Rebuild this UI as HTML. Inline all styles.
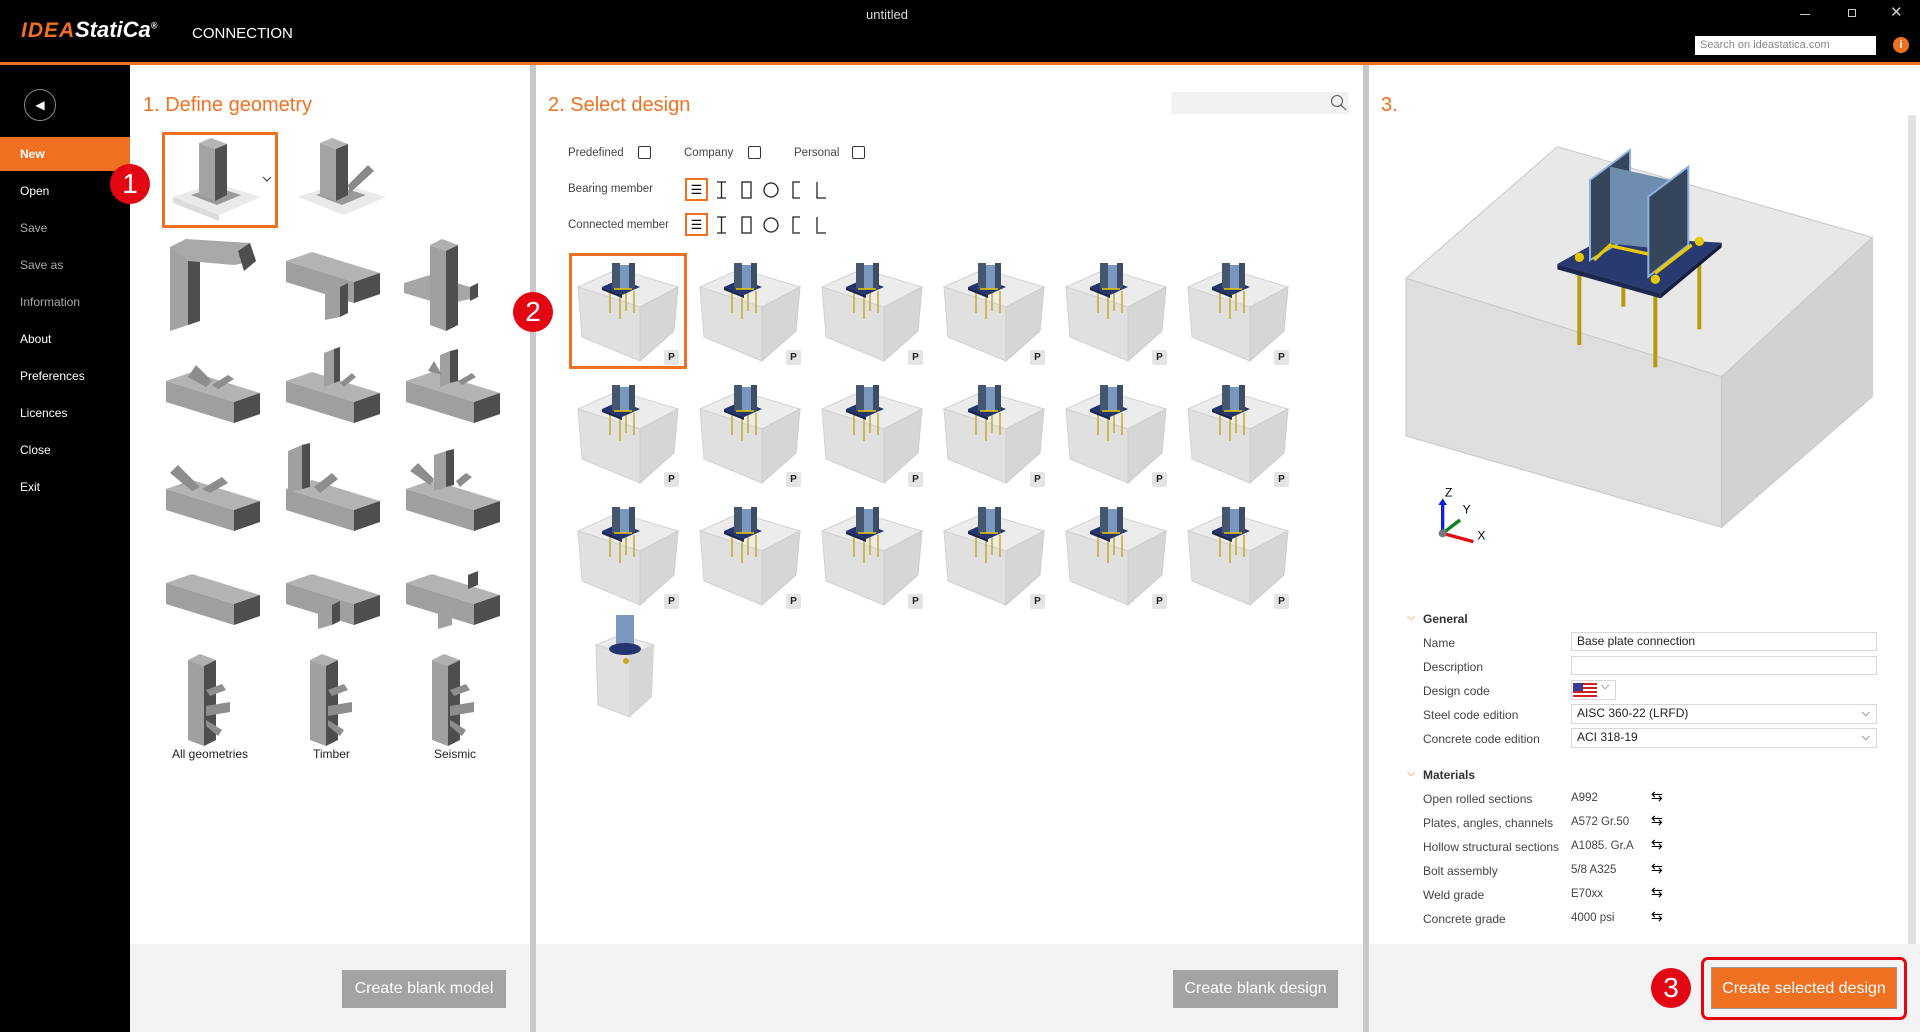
<!DOCTYPE html>
<html><head><meta charset="utf-8"><style>
*{margin:0;padding:0;box-sizing:border-box}
body{width:1920px;height:1032px;overflow:hidden;background:#fff;font-family:"Liberation Sans",sans-serif;position:relative}
.a{position:absolute}
.hdr{left:0;top:0;width:1920px;height:62px;background:#000}
.ol{left:0;top:62px;width:1920px;height:3px;background:#f07022}
.side{left:0;top:65px;width:130px;height:967px;background:#000}
.si{position:absolute;left:20px;font-size:12px;color:#fff}
.ttl{font-size:20px;color:#f07022}
.div{background:#c8c8c8;width:6px;top:65px;height:967px}
.bot{top:944px;height:88px;background:#f3f3f3}
.btn{background:#a3a3a3;color:#fff;font-size:16px;text-align:center;line-height:38px;height:38px}
.lbl{font-size:11.5px;color:#444}
.cb{width:13px;height:13px;border:1px solid #333;border-radius:2px}
.pb{width:15px;height:15px;background:#e4e4e4;border-radius:2px;font-size:10px;font-weight:bold;text-align:center;line-height:15px;color:#222}
.pl{font-size:12px;color:#444;left:1423px}
.inp{left:1571px;width:306px;height:19px;border:1px solid #d8d8d8;font-size:12px;color:#222;padding-left:5px;line-height:17px}
.rc{border-radius:50%;background:#e30613;color:#fff;text-align:center;font-size:28px}
.geo{width:110px;height:100px}
</style></head><body>
<svg width="0" height="0" style="position:absolute">
<defs>
<symbol id="blk" viewBox="0 0 116 116">
<polygon points="8,34 48,16 108,34 70,54" fill="#ececec" stroke="#d2d2d2"/>
<polygon points="8,34 70,54 70,108 12,84" fill="#e0e0e0" stroke="#d2d2d2"/>
<polygon points="70,54 108,34 104,78 70,108" fill="#d6d6d6" stroke="#cdcdcd"/>
</symbol>
<symbol id="col" viewBox="0 0 116 116">
<g stroke="#c9a820" stroke-width="1.5"><line x1="40" y1="36" x2="40" y2="60"/><line x1="50" y1="40" x2="50" y2="66"/><line x1="56" y1="34" x2="56" y2="58"/><line x1="64" y1="38" x2="64" y2="60"/></g>
<polygon points="32,34 50,26 70,34 52,42" fill="#24346e"/>
<polygon points="32,34 52,42 52,45 32,37" fill="#1a2550"/>
<rect x="42" y="10" width="8" height="26" fill="#45566f"/>
<rect x="50" y="12" width="9" height="24" fill="#7a97bf"/>
<rect x="59" y="10" width="6" height="26" fill="#3d4d66"/>
<line x1="44" y1="36" x2="62" y2="36" stroke="#e8c800" stroke-width="1.5"/>
</symbol>
<symbol id="beam" viewBox="0 0 110 100">
<polygon points="6,46 32,37 100,58 74,67" fill="#b3b3b3"/>
<polygon points="6,46 74,67 74,88 6,67" fill="#9f9f9f"/>
<polygon points="74,67 100,58 100,79 74,88" fill="#4e4e4e"/>
</symbol>
<symbol id="vcol" viewBox="0 0 110 100">
<polygon points="30,10 42,4 58,10 46,16" fill="#b0b0b0"/>
<polygon points="30,10 46,16 46,96 30,90" fill="#a0a0a0"/>
<polygon points="46,16 58,10 58,90 46,96" fill="#4e4e4e"/>
</symbol>
<symbol id="flt" viewBox="0 0 130 24">
<g fill="none" stroke="#222" stroke-width="1.3">
<path d="M2 4h9M6.5 4v16M2 20h9"/>
<rect x="27" y="4" width="9" height="16"/>
<circle cx="56" cy="12" r="7"/>
<path d="M85 4h-7v16h7"/>
<path d="M102 4v16h9"/>
</g></symbol>
</defs></svg>

<div class="a hdr"></div>
<div class="a" style="left:21px;top:19px;font-size:21px;font-weight:bold;font-style:italic;color:#f07022;letter-spacing:1px">IDEA</div>
<div class="a" style="left:75px;top:17px;font-size:22px;font-weight:bold;font-style:italic;color:#fff">StatiCa<sup style="font-size:9px">®</sup></div>
<div class="a" style="left:192px;top:25px;font-size:15px;color:#fff">CONNECTION</div>
<div class="a" style="left:866px;top:7px;font-size:13px;color:#ddd">untitled</div>
<div class="a" style="left:1800px;top:14px;width:10px;height:1px;background:#ccc"></div>
<div class="a" style="left:1848px;top:9px;width:8px;height:8px;border:1px solid #ccc"></div>
<div class="a" style="left:1890px;top:3px;font-size:15px;color:#ccc">✕</div>
<div class="a" style="left:1695px;top:36px;width:181px;height:19px;background:#fff;font-size:11px;color:#888;padding:3px 5px">Search on ideastatica.com</div>
<div class="a" style="left:1893px;top:37px;width:16px;height:16px;border-radius:50%;background:#f07022;color:#fff;font-size:11px;font-weight:bold;text-align:center;line-height:16px">i</div>
<div class="a ol"></div>

<div class="a side"></div>
<div class="a" style="left:24px;top:89px;width:32px;height:32px;border:1px solid #888;border-radius:50%;color:#fff;font-size:12px;text-align:center;line-height:30px">◀</div>
<div class="a" style="left:0;top:137px;width:130px;height:34px;background:#f07022"></div>
<div class="si" style="top:147px;font-weight:bold">New</div>
<div class="si" style="top:184px">Open</div>
<div class="si" style="top:221px;color:#aaa">Save</div>
<div class="si" style="top:258px;color:#aaa">Save as</div>
<div class="si" style="top:295px;color:#aaa">Information</div>
<div class="si" style="top:332px">About</div>
<div class="si" style="top:369px">Preferences</div>
<div class="si" style="top:406px">Licences</div>
<div class="si" style="top:443px">Close</div>
<div class="si" style="top:480px">Exit</div>

<!-- panel 1 -->
<div class="a ttl" style="left:143px;top:94px">1. Define geometry</div>
<div class="a" style="left:162px;top:132px;width:116px;height:96px;border:3px solid #f07022"></div>
<svg class="a" style="left:165px;top:135px" width="110" height="90" viewBox="0 0 110 90"><polygon points="8,62 50,48 96,62 54,80" fill="#eaeaea"/><polygon points="8,62 54,80 54,86 8,68" fill="#dcdcdc"/><polygon points="26,60 50,52 76,60 52,70" fill="#9a9a9a"/><polygon points="34,8 46,3 62,9 50,14" fill="#b5b5b5"/><polygon points="34,8 50,14 50,66 34,60" fill="#a3a3a3"/><polygon points="50,14 62,9 62,60 50,66" fill="#505050"/><path d="M98 42l4 4 4-4" stroke="#333" fill="none"/></svg>
<svg class="a" style="left:290px;top:135px" width="110" height="90" viewBox="0 0 110 90"><polygon points="8,62 50,48 96,62 54,80" fill="#eaeaea"/><polygon points="26,60 50,52 76,60 52,70" fill="#9a9a9a"/><polygon points="30,8 42,3 58,9 46,14" fill="#b5b5b5"/><polygon points="30,8 46,14 46,66 30,60" fill="#a3a3a3"/><polygon points="46,14 58,9 58,60 46,66" fill="#505050"/><polygon points="58,50 78,30 84,36 60,58" fill="#8a8a8a"/></svg>
<svg class="a geo" style="left:160px;top:235px" viewBox="0 0 110 100"><polygon points="10,12 28,4 28,90 10,96" fill="#a2a2a2"/><polygon points="28,20 40,16 40,86 28,90" fill="#4e4e4e"/><polygon points="10,12 26,4 90,8 96,26 74,30 28,26" fill="#a8a8a8"/><polygon points="90,8 96,26 84,36 78,16" fill="#4e4e4e"/></svg>
<svg class="a geo" style="left:280px;top:235px"><use href="#beam" y="-20"/><polygon points="45,55 60,52 60,82 45,85" fill="#a0a0a0"/><polygon points="60,52 68,48 68,78 60,82" fill="#4e4e4e"/></svg>
<svg class="a geo" style="left:400px;top:235px"><polygon points="4,48 30,40 70,52 70,64 44,70 4,58" fill="#a6a6a6"/><polygon points="70,52 78,48 78,62 70,66" fill="#4e4e4e"/><use href="#vcol"/></svg>
<svg class="a geo" style="left:160px;top:335px"><use href="#beam"/><polygon points="28,42 36,30 52,46 46,52" fill="#8d8d8d"/><polygon points="52,50 68,40 74,44 58,54" fill="#8d8d8d"/></svg>
<svg class="a geo" style="left:280px;top:335px"><use href="#beam"/><polygon points="44,18 54,14 54,48 44,52" fill="#a0a0a0"/><polygon points="54,14 60,12 60,46 54,48" fill="#4e4e4e"/><polygon points="60,48 72,38 76,42 64,52" fill="#8d8d8d"/></svg>
<svg class="a geo" style="left:400px;top:335px"><use href="#beam"/><polygon points="40,20 50,16 50,48 40,52" fill="#a0a0a0"/><polygon points="50,16 58,14 58,46 50,48" fill="#4e4e4e"/><polygon points="28,36 34,26 42,40" fill="#8d8d8d"/><polygon points="58,46 72,38 76,42 62,50" fill="#8d8d8d"/></svg>
<svg class="a geo" style="left:160px;top:435px"><use href="#beam" y="8"/><polygon points="10,38 18,30 40,52 32,56" fill="#8d8d8d"/><polygon points="42,54 62,42 68,48 50,58" fill="#8d8d8d"/></svg>
<svg class="a geo" style="left:280px;top:435px"><use href="#beam" y="8"/><polygon points="8,16 22,10 22,54 8,58" fill="#a0a0a0"/><polygon points="22,10 30,8 30,52 22,54" fill="#4e4e4e"/><polygon points="34,52 52,38 58,44 40,58" fill="#8d8d8d"/></svg>
<svg class="a geo" style="left:400px;top:435px"><use href="#beam" y="8"/><polygon points="34,20 46,16 46,52 34,56" fill="#a0a0a0"/><polygon points="46,16 54,14 54,50 46,52" fill="#4e4e4e"/><polygon points="10,36 18,28 34,44 30,50" fill="#8d8d8d"/><polygon points="56,46 66,38 72,42 60,52" fill="#8d8d8d"/></svg>
<svg class="a geo" style="left:160px;top:545px"><use href="#beam" y="-8"/></svg>
<svg class="a geo" style="left:280px;top:545px"><use href="#beam" y="-8"/><polygon points="38,64 52,60 52,80 38,84" fill="#a0a0a0"/><polygon points="52,60 60,56 60,76 52,80" fill="#4e4e4e"/></svg>
<svg class="a geo" style="left:400px;top:545px"><use href="#beam" y="-8"/><polygon points="38,64 52,60 52,80 38,84" fill="#a0a0a0"/><polygon points="68,30 78,26 78,40 68,44" fill="#4e4e4e"/></svg>
<svg class="a geo" style="left:160px;top:650px"><use href="#vcol" x="-2"/><polygon points="46,40 62,34 66,40 50,46" fill="#8d8d8d"/><polygon points="46,56 70,52 70,62 46,66" fill="#8d8d8d"/><polygon points="46,70 62,80 58,86 46,76" fill="#8d8d8d"/></svg>
<svg class="a geo" style="left:282px;top:650px"><use href="#vcol" x="-2"/><polygon points="46,40 62,34 66,40 50,46" fill="#8d8d8d"/><polygon points="46,56 70,52 70,62 46,66" fill="#8d8d8d"/><polygon points="46,70 62,80 58,86 46,76" fill="#8d8d8d"/></svg>
<svg class="a geo" style="left:404px;top:650px"><use href="#vcol" x="-2"/><polygon points="46,40 62,34 66,40 50,46" fill="#8d8d8d"/><polygon points="46,56 70,52 70,62 46,66" fill="#8d8d8d"/><polygon points="46,70 62,80 58,86 46,76" fill="#8d8d8d"/></svg>
<div class="a" style="left:172px;top:747px;font-size:12px;color:#222">All geometries</div>
<div class="a" style="left:313px;top:747px;font-size:12px;color:#222">Timber</div>
<div class="a" style="left:434px;top:747px;font-size:12px;color:#222">Seismic</div>
<div class="a rc" style="left:110px;top:164px;width:40px;height:40px;line-height:40px">1</div>
<div class="a bot" style="left:130px;width:400px"></div>
<div class="a btn" style="left:342px;top:970px;width:164px">Create blank model</div>
<div class="a div" style="left:530px"></div>

<!-- panel 2 -->
<div class="a ttl" style="left:548px;top:94px">2. Select design</div>
<div class="a" style="left:1171px;top:92px;width:178px;height:22px;background:#f2f2f2"></div>
<svg class="a" style="left:1330px;top:94px" width="18" height="18"><circle cx="7" cy="7" r="5.5" fill="none" stroke="#555"/><line x1="11" y1="11" x2="16" y2="16" stroke="#555"/></svg>
<div class="a lbl" style="left:568px;top:147px">Predefined</div><div class="a cb" style="left:638px;top:146px"></div>
<div class="a lbl" style="left:684px;top:147px">Company</div><div class="a cb" style="left:748px;top:146px"></div>
<div class="a lbl" style="left:794px;top:147px">Personal</div><div class="a cb" style="left:852px;top:146px"></div>
<div class="a lbl" style="left:568px;top:183px">Bearing member</div>
<div class="a lbl" style="left:568px;top:219px">Connected member</div>
<div class="a" style="left:685px;top:178px;width:23px;height:23px;border:2px solid #f07022;font-size:13px;text-align:center;line-height:19px">☰</div>
<div class="a" style="left:685px;top:213px;width:23px;height:23px;border:2px solid #f07022;font-size:13px;text-align:center;line-height:19px">☰</div>
<svg class="a" style="left:715px;top:178px" width="130" height="24"><use href="#flt"/></svg>
<svg class="a" style="left:715px;top:213px" width="130" height="24"><use href="#flt"/></svg>

<div class="a" style="left:569px;top:253px;width:118px;height:116px;border:3px solid #f07022"></div>
<svg class="a" style="left:570px;top:253px" width="740" height="500">
<g id="c1"><use href="#blk" width="116" height="116"/><use href="#col" width="116" height="116"/></g>
<use href="#c1" x="122"/><use href="#c1" x="244"/><use href="#c1" x="366"/><use href="#c1" x="488"/><use href="#c1" x="610"/>
<use href="#c1" y="122"/><use href="#c1" x="122" y="122"/><use href="#c1" x="244" y="122"/><use href="#c1" x="366" y="122"/><use href="#c1" x="488" y="122"/><use href="#c1" x="610" y="122"/>
<use href="#c1" y="244"/><use href="#c1" x="122" y="244"/><use href="#c1" x="244" y="244"/><use href="#c1" x="366" y="244"/><use href="#c1" x="488" y="244"/><use href="#c1" x="610" y="244"/>
<g transform="translate(20,370)"><polygon points="6,22 30,12 64,22 40,32" fill="#ececec" stroke="#d2d2d2"/><polygon points="6,22 40,32 40,94 8,82" fill="#e0e0e0" stroke="#d2d2d2"/><polygon points="40,32 64,22 62,74 40,94" fill="#d6d6d6"/><rect x="26" y="-8" width="18" height="34" fill="#7a97bf"/><ellipse cx="35" cy="26" rx="16" ry="6" fill="#24346e"/><circle cx="36" cy="38" r="3" fill="#c9a820"/></g>
</svg>
<div class="a pb" style="left:664px;top:350px">P</div><div class="a pb" style="left:786px;top:350px">P</div><div class="a pb" style="left:908px;top:350px">P</div><div class="a pb" style="left:1030px;top:350px">P</div><div class="a pb" style="left:1152px;top:350px">P</div><div class="a pb" style="left:1274px;top:350px">P</div>
<div class="a pb" style="left:664px;top:472px">P</div><div class="a pb" style="left:786px;top:472px">P</div><div class="a pb" style="left:908px;top:472px">P</div><div class="a pb" style="left:1030px;top:472px">P</div><div class="a pb" style="left:1152px;top:472px">P</div><div class="a pb" style="left:1274px;top:472px">P</div>
<div class="a pb" style="left:664px;top:594px">P</div><div class="a pb" style="left:786px;top:594px">P</div><div class="a pb" style="left:908px;top:594px">P</div><div class="a pb" style="left:1030px;top:594px">P</div><div class="a pb" style="left:1152px;top:594px">P</div><div class="a pb" style="left:1274px;top:594px">P</div>
<div class="a rc" style="left:513px;top:292px;width:40px;height:40px;line-height:40px">2</div>
<div class="a bot" style="left:536px;width:827px"></div>
<div class="a btn" style="left:1173px;top:970px;width:165px">Create blank design</div>
<div class="a div" style="left:1363px"></div>

<!-- panel 3 -->
<div class="a ttl" style="left:1381px;top:94px">3.</div>
<svg class="a" style="left:1390px;top:130px" width="500" height="420" viewBox="0 0 1500 1260">
<polygon points="48,445 502,50 1447,322 995,740" fill="#e8e8e8" stroke="#c8c8c8" stroke-width="3"/>
<polygon points="48,445 995,740 995,1192 48,918" fill="#dedede" stroke="#c8c8c8" stroke-width="3"/>
<polygon points="995,740 1447,322 1447,800 995,1192" fill="#d2d2d2" stroke="#c8c8c8" stroke-width="3"/>
<g stroke="#b89a10" stroke-width="12"><line x1="568" y1="420" x2="568" y2="645"/><line x1="700" y1="440" x2="700" y2="530"/><line x1="796" y1="480" x2="796" y2="712"/><line x1="928" y1="390" x2="928" y2="598"/></g>
<polygon points="502,402 650,320 995,338 812,490" fill="#283a70"/>
<polygon points="502,402 812,490 812,505 502,418" fill="#1c2850"/>
<polygon points="812,490 995,338 995,352 812,505" fill="#141e40"/>
<polygon points="600,150 720,60 720,320 600,390" fill="#35455c" stroke="#8fb3e0" stroke-width="6"/>
<polygon points="660,110 840,150 840,360 660,340" fill="#6f8dae"/>
<polygon points="775,200 895,110 895,345 775,440" fill="#35455c" stroke="#8fb3e0" stroke-width="6"/>
<g stroke="#e8c800" stroke-width="10"><line x1="612" y1="390" x2="664" y2="342"/><line x1="664" y1="348" x2="775" y2="372"/><line x1="795" y1="430" x2="905" y2="345"/></g>
<g fill="#e8c800"><circle cx="568" cy="382" r="14"/><circle cx="796" cy="448" r="14"/><circle cx="928" cy="334" r="14"/></g>
<line x1="158" y1="1210" x2="158" y2="1120" stroke="#1020e0" stroke-width="10"/><polygon points="145,1125 158,1105 171,1125" fill="#1020e0"/>
<line x1="158" y1="1210" x2="210" y2="1170" stroke="#108020" stroke-width="10"/>
<line x1="158" y1="1210" x2="250" y2="1235" stroke="#e01010" stroke-width="10"/>
<circle cx="158" cy="1210" r="12" fill="#777"/>
<text x="165" y="1100" font-size="36" font-family="Liberation Sans">Z</text><text x="218" y="1150" font-size="36" font-family="Liberation Sans">Y</text><text x="262" y="1228" font-size="36" font-family="Liberation Sans">X</text>
</svg>
<div class="a" style="left:1908px;top:115px;width:8px;height:830px;background:#e2e2e2"></div>
<div class="a" style="left:1407px;top:611px;color:#f07022;font-size:11px">⌵</div>
<div class="a" style="left:1423px;top:612px;font-size:12px;font-weight:bold;color:#333">General</div>
<div class="a pl" style="top:636px">Name</div><div class="a inp" style="top:632px">Base plate connection</div>
<div class="a pl" style="top:660px">Description</div><div class="a inp" style="top:656px"></div>
<div class="a pl" style="top:684px">Design code</div>
<div class="a" style="left:1571px;top:680px;width:45px;height:20px;border:1px solid #d8d8d8"></div>
<svg class="a" style="left:1573px;top:683px" width="24" height="14"><rect width="24" height="14" fill="#fff"/><g fill="#c22"><rect y="0" width="24" height="2"/><rect y="4" width="24" height="2"/><rect y="8" width="24" height="2"/><rect y="12" width="24" height="2"/></g><rect width="10" height="8" fill="#3b3b8f"/></svg>
<div class="a" style="left:1601px;top:680px;font-size:11px;color:#333">⌵</div>
<div class="a pl" style="top:708px">Steel code edition</div><div class="a inp" style="top:704px;height:20px">AISC 360-22 (LRFD)<span style="position:absolute;right:6px;font-size:11px">⌵</span></div>
<div class="a pl" style="top:732px">Concrete code edition</div><div class="a inp" style="top:728px;height:20px">ACI 318-19<span style="position:absolute;right:6px;font-size:11px">⌵</span></div>
<div class="a" style="left:1407px;top:767px;color:#f07022;font-size:11px">⌵</div>
<div class="a" style="left:1423px;top:768px;font-size:12px;font-weight:bold;color:#333">Materials</div>
<div class="a pl" style="top:792px">Open rolled sections</div><div class="a lbl" style="left:1571px;top:792px">A992</div><div class="a" style="left:1651px;top:788px;font-size:14px">⇆</div>
<div class="a pl" style="top:816px">Plates, angles, channels</div><div class="a lbl" style="left:1571px;top:816px">A572 Gr.50</div><div class="a" style="left:1651px;top:812px;font-size:14px">⇆</div>
<div class="a pl" style="top:840px">Hollow structural sections</div><div class="a lbl" style="left:1571px;top:840px">A1085. Gr.A</div><div class="a" style="left:1651px;top:836px;font-size:14px">⇆</div>
<div class="a pl" style="top:864px">Bolt assembly</div><div class="a lbl" style="left:1571px;top:864px">5/8 A325</div><div class="a" style="left:1651px;top:860px;font-size:14px">⇆</div>
<div class="a pl" style="top:888px">Weld grade</div><div class="a lbl" style="left:1571px;top:888px">E70xx</div><div class="a" style="left:1651px;top:884px;font-size:14px">⇆</div>
<div class="a pl" style="top:912px">Concrete grade</div><div class="a lbl" style="left:1571px;top:912px">4000 psi</div><div class="a" style="left:1651px;top:908px;font-size:14px">⇆</div>
<div class="a bot" style="left:1369px;width:551px"></div>
<div class="a" style="left:1701px;top:957px;width:206px;height:63px;border:3px solid #e30613;border-radius:7px"></div>
<div class="a btn" style="left:1711px;top:967px;width:186px;height:42px;line-height:42px;background:#f07022;border:1px solid #999">Create selected design</div>
<div class="a rc" style="left:1651px;top:968px;width:40px;height:40px;line-height:40px">3</div>
</body></html>
